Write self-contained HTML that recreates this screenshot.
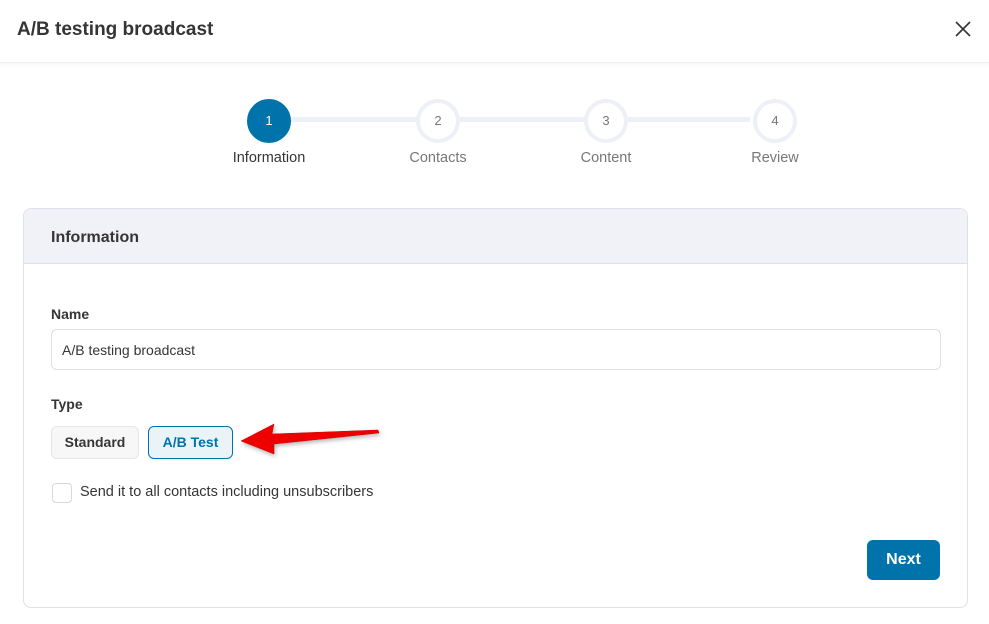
<!DOCTYPE html>
<html><head><style>
*{box-sizing:border-box;margin:0;padding:0}
body{width:989px;height:624px;background:#fff;font-family:"Liberation Sans",sans-serif;position:relative;overflow:hidden;color:#353535}
.hdr{position:absolute;left:0;top:0;width:989px;height:63px;border-bottom:1px solid #eceef2;box-shadow:0 2px 4px rgba(0,0,0,.04)}
.hdr h1{position:absolute;left:17px;top:19px;font-size:19px;font-weight:bold;color:#353535}
.x{position:absolute;left:954px;top:20px}
.line{position:absolute;top:117px;height:5px;background:#eef0f8}
.c{position:absolute;top:99px;width:44px;height:44px;border-radius:50%;border:4px solid #eef0f8;background:#fff;text-align:center;line-height:36px;font-size:13px;color:#777}
.c.a{background:#0073aa;border-color:#0073aa;color:#fff}
.lb{position:absolute;top:150px;font-size:14.5px;color:#777;width:120px;text-align:center}
.card{position:absolute;left:23px;top:208px;width:945px;height:400px;border:1px solid #dfe1e8;border-radius:8px;overflow:hidden}
.ch{height:55px;background:#f1f1f8;border-bottom:1px solid #dfe1e8;padding:20px 27px;font-size:16px;font-weight:bold;color:#353535}
.l{position:absolute;left:27px;font-size:14px;font-weight:bold;color:#353535}
.inp{position:absolute;left:27px;top:120px;width:890px;height:41px;border:1px solid #dcdfe6;border-radius:6px;padding:12px 10px;font-size:14px;color:#353535}
.btn{position:absolute;top:217px;height:33px;border-radius:6px;font-size:14px;font-weight:bold;text-align:center;line-height:31px}
.cb{position:absolute;left:28px;top:274px;width:20px;height:20px;border:1.5px solid #d5d7e3;border-radius:4px}
.next{position:absolute;left:843px;top:331px;width:73px;height:40px;background:#0073aa;border-radius:6px;color:#fff;font-weight:bold;font-size:16px;text-align:center;line-height:40px}
</style></head><body>
<div class="hdr"><h1>A/B testing broadcast</h1>
<svg class="x" width="18" height="18" viewBox="0 0 18 18"><path d="M2 2L16 16M16 2L2 16" stroke="#333" stroke-width="1.6"/></svg></div>
<div class="line" style="left:290px;width:460px"></div>
<div class="c a" style="left:247px">1</div>
<div class="c" style="left:416px">2</div>
<div class="c" style="left:584px">3</div>
<div class="c" style="left:753px">4</div>
<div class="lb" style="left:209px;color:#353535">Information</div>
<div class="lb" style="left:378px">Contacts</div>
<div class="lb" style="left:546px">Content</div>
<div class="lb" style="left:715px">Review</div>
<div class="card">
<div class="ch">Information</div>
<div class="l" style="top:97px">Name</div>
<div class="inp">A/B testing broadcast</div>
<div class="l" style="top:187px">Type</div>
<div class="btn" style="left:27px;width:88px;background:#f7f7f7;border:1px solid #e6e6e6;color:#353535">Standard</div>
<div class="btn" style="left:124px;width:85px;background:#eaf3f8;border:1px solid #0073aa;color:#0073aa">A/B Test</div>
<div class="cb"></div>
<div style="position:absolute;left:56px;top:275px;font-size:14.5px;color:#353535">Send it to all contacts including unsubscribers</div>
<div class="next">Next</div>
</div>
<svg style="position:absolute;left:0;top:0" width="989" height="624"><path d="M241 441L274 424L272 434L378 430L379 433L274 444L274 454Z" fill="#ee0000" stroke="#c00" stroke-width="0.5" style="filter:drop-shadow(1px 2px 2px rgba(0,0,0,.3))"/></svg>
</body></html>
